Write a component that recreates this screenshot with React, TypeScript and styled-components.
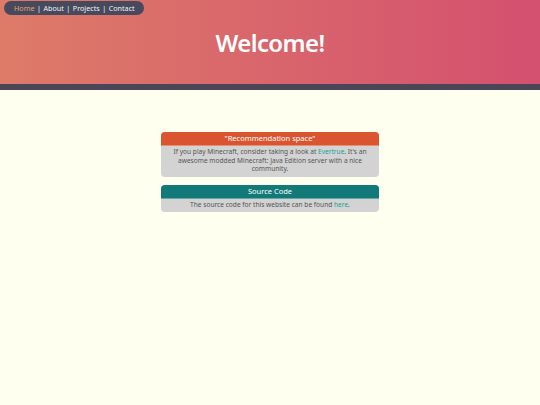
import React from "react";
import styled, { createGlobalStyle } from "styled-components";

const GlobalStyle = createGlobalStyle`
  html, body {
    margin: 0;
    padding: 0;
    background: #fffff0;
    font-family: "Noto Sans", "DejaVu Sans", sans-serif;
  }
`;

const Header = styled.header`
  height: 84px;
  background: linear-gradient(to right, #dd7b68, #d4506f);
  border-bottom: 6px solid #4a4658;
  display: flex;
  flex-direction: column;
  align-items: center;
`;

const NavBar = styled.nav`
  align-self: flex-start;
  margin: 1px 0 0 4px;
  height: 14px;
  padding: 0 9px 0 10px;
  border-radius: 8px;
  background: #474a5c;
  color: #f2f2f2;
  font-size: 7.2px;
  display: flex;
  align-items: center;
  gap: 2.5px;
  white-space: nowrap;
`;

const NavLink = styled.span<{ $active?: boolean }>`
  color: ${(p) => (p.$active ? "#e8a070" : "#f2f2f2")};
`;

const Title = styled.h1`
  margin: 11px 0 0;
  color: #fff;
  font-size: 24px;
  font-weight: 600;
  letter-spacing: -0.6px;
  line-height: 34px;
`;

const Main = styled.main`
  display: flex;
  flex-direction: column;
  align-items: center;
  gap: 8px;
  padding-top: 42px;
`;

const Card = styled.section`
  width: 218px;
  border-radius: 4px;
  overflow: hidden;
  background: #d3d3d3;
`;

const CardHead = styled.div<{ $color: string }>`
  background: ${(p) => p.$color};
  color: #fff;
  font-size: 7.5px;
  height: 13px;
  line-height: 13px;
  text-align: center;
  border-bottom: 1px solid rgba(255, 255, 255, 0.35);
`;

const CardBody = styled.p`
  margin: 0;
  padding: 2px 8px 3px;
  color: #555;
  font-size: 6.6px;
  line-height: 8.5px;
  text-align: center;
`;

const Link = styled.a`
  color: #1a9e9b;
  text-decoration: none;
`;

export default function App() {
  return (
    <>
      <GlobalStyle />
      <Header>
        <NavBar>
          <NavLink $active>Home</NavLink>|<NavLink>About</NavLink>|
          <NavLink>Projects</NavLink>|<NavLink>Contact</NavLink>
        </NavBar>
        <Title>Welcome!</Title>
      </Header>
      <Main>
        <Card>
          <CardHead $color="#d9542f">"Recommendation space"</CardHead>
          <CardBody>
            If you play Minecraft, consider taking a look at <Link href="#">Evertrue</Link>. It's an
            awesome modded Minecraft: Java Edition server with a nice community.
          </CardBody>
        </Card>
        <Card>
          <CardHead $color="#117a78">Source Code</CardHead>
          <CardBody>
            The source code for this website can be found <Link href="#">here</Link>.
          </CardBody>
        </Card>
      </Main>
    </>
  );
}
